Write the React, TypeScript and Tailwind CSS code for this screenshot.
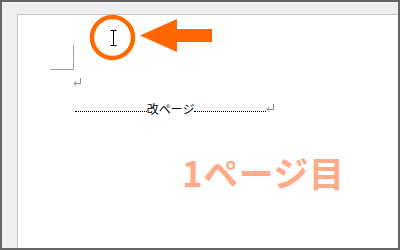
import React from 'react';

function ReturnMark({ className }: { className?: string }) {
  return (
    <svg className={className} width="9" height="8" viewBox="0 0 9 8" fill="none">
      <path d="M7.5 0 V5.5 H1" stroke="#8c8c8c" strokeWidth="1" />
      <path d="M3.5 3 L1 5.5 L3.5 8" stroke="#8c8c8c" strokeWidth="1" />
    </svg>
  );
}

export default function App() {
  return (
    <div className="relative w-[400px] h-[250px] border-2 border-[#656565] bg-[#efefef] pl-[15px] pt-[12px] overflow-hidden">
      {/* page */}
      <div className="h-full bg-white border-l border-t border-[#c6c6c6] flex flex-col">
        {/* crop mark */}
        <div className="ml-[32px] mt-[30px] w-[24px] h-[25px] border-r border-b border-[#a3a3a3]" />
        <ReturnMark className="ml-[55px] mt-[8px]" />

        {/* page break */}
        <div className="ml-[57px] mt-[16px] flex items-center h-[14px]">
          <div className="flex w-[191px] items-center">
            <div className="flex-1 mt-[4px] border-b border-dotted border-black" />
            <span
              className="text-[12px] leading-none text-black"
              style={{ fontFamily: '"Noto Sans CJK JP", sans-serif' }}
            >
              改ページ
            </span>
            <div className="flex-1 mt-[4px] border-b border-dotted border-black" />
          </div>
          <ReturnMark className="mt-[-2px]" />
        </div>

        <div
          className="ml-[164px] mt-[38px] text-[35px] leading-none font-bold text-[#ffaa88] tracking-[0.5px]"
          style={{ fontFamily: '"Noto Sans CJK JP", sans-serif' }}
        >
          1ページ目
        </div>
      </div>

      {/* annotation: cursor highlight and arrow */}
      <svg
        className="absolute left-[86px] top-[10px] pointer-events-none"
        width="128"
        height="52"
        viewBox="88 12 128 52"
      >
        <circle cx="112.5" cy="37.5" r="20.5" fill="none" stroke="#ff6a00" strokeWidth="4.5" />
        <path
          d="M110.5 30.5 H116.5 M113.5 31 V45 M110.5 45.5 H116.5"
          stroke="#000"
          strokeWidth="1"
          fill="none"
        />
        <polygon
          points="140,35.5 177,19 177,29 212,29 212,42 177,42 177,52"
          fill="#ff6600"
        />
      </svg>
    </div>
  );
}
